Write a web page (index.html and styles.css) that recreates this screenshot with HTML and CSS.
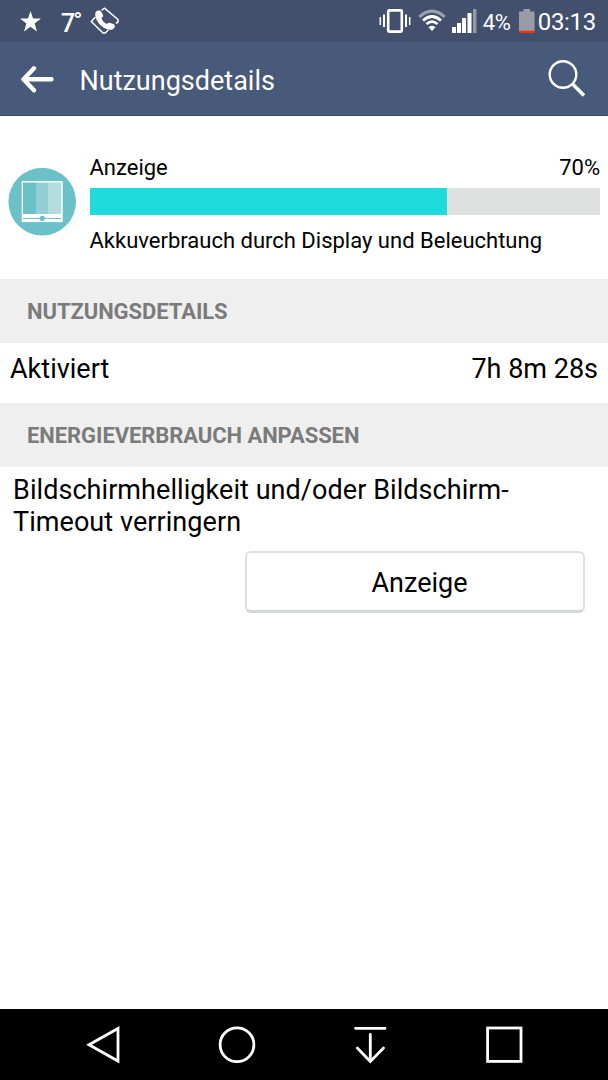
FILE: index.html
```html
<!DOCTYPE html>
<html lang="de">
  <head>
    <meta charset="UTF-8" />
    <meta name="viewport" content="width=device-width, initial-scale=1.0" />
    <title>Nutzungsdetails</title>
    <link rel="stylesheet" href="styles.css">
  </head>

  <body>
    <div class="status">
      <svg class="star" width="21" height="21" viewBox="0 0 20 20">
        <path fill="#fff" d="M10 0L12.4 7.2H20L13.9 11.9L16.2 19.5L10 15L3.8 19.5L6.1 11.9L0 7.2H7.6Z" />
      </svg>
      <div class="temp">7<span class="degree">°</span></div>
      <svg class="call" width="30" height="28" viewBox="0 0 30 28">
        <g fill="none" stroke="#fff" stroke-width="1.5" stroke-linejoin="round" stroke-linecap="round">
          <path d="M12 3L14.5 1.2L28 12.5V15L26.4 16" />
          <path d="M5 10.5L1.3 14.5L13 26L15.2 26L18 23.2" />
        </g>
        <path fill="#fff" d="M7.2 3.8C8.7 3 10.5 3.5 11.3 4.8L12.8 7.4C13.5 8.7 12.9 10 11.5 10.8C12 13.6 14.2 16 17 17C17.9 15.8 19 15.4 20.3 15.9L23.2 16.9C24.7 17.5 25.3 19 24.5 20.4C23.2 22.7 20.8 23.3 17.5 22.3C11.3 20.4 6.2 14.8 5.3 8.5C5 6.3 5.5 4.7 7.2 3.8Z" />
      </svg>
      <div class="right">
        <svg width="32" height="24" viewBox="0 0 32 24">
          <rect x="9.2" y="1.4" width="13.6" height="21.2" rx="1" fill="none" stroke="#fff" stroke-width="2.6" />
          <path stroke="#fff" stroke-width="2" d="M5 5.5V18M27 5.5V18" />
          <path stroke="#fff" stroke-width="1.5" d="M1.3 8V16M30.7 8V16" />
        </svg>
        <svg class="wifi" width="28" height="24" viewBox="0 0 28 24">
          <g fill="none" stroke="#fff">
            <path stroke="#9aa1af" stroke-width="3" d="M1.3 7.8Q14 -3.5 26.7 7.8" />
            <path stroke-width="2.8" d="M5 11.5Q14 3.5 23 11.5" />
            <path stroke-width="2.6" d="M8.5 15Q14 10.2 19.5 15" />
          </g>
          <path fill="#fff" d="M10.5 18.2Q14 15.5 17.5 18.2L14 22Z" />
        </svg>
        <svg class="signal" width="25" height="24" viewBox="0 0 25 24">
          <path fill="#fff" d="M0 18h4v6H0zM5 14h4v10H5zM10 9h4v15h-4zM15.5 4h4v20h-4z" />
          <path fill="#9299a8" d="M21 0h3.5v24H21z" />
        </svg>
        <div class="percent">4%</div>
        <svg class="battery" width="16" height="24" viewBox="0 0 16 24">
          <path fill="#999ca3" d="M4.5 0h6.5v2.5h4.5V22H0V2.5h4.5z" />
          <path fill="#ee3213" d="M0 21.7h15.5V24H0z" />
        </svg>
        <div class="time">03:13</div>
      </div>
    </div>

    <div class="header">
      <svg width="34" height="28" viewBox="0 0 34 28">
        <path fill="none" stroke="#fff" stroke-width="4.4" stroke-linecap="round" stroke-linejoin="round" d="M31.5 14.3H3.5M14 3.3L3.5 14.3L14 25.3" />
      </svg>
      <h1>Nutzungsdetails</h1>
      <svg width="38" height="38" viewBox="0 0 38 38">
        <circle cx="15" cy="14.5" r="13.3" fill="none" stroke="#fff" stroke-width="2.4" />
        <path stroke="#fff" stroke-width="3.6" d="M24.5 24L36 35.5" />
      </svg>
    </div>

    <div class="usage">
      <svg width="68" height="68" viewBox="0 0 68 68">
        <circle cx="34.2" cy="33.7" r="33.8" fill="#6bc1c8" />
        <rect x="13.7" y="13" width="41" height="41.1" fill="#fff" />
        <path fill="#6bc1c8" d="M15 14.5h13V46H15z" />
        <path fill="#93cfd4" d="M28 14.5h12V46H28z" />
        <path fill="#b4dcdf" d="M40 14.5h13.3V46H40z" />
        <path stroke="#6bc1c8" d="M15 50.5h38" />
        <circle cx="34.3" cy="50.3" r="2.6" fill="#6bc1c8" />
      </svg>
      <div class="info">
        <div class="labels">
          <span>Anzeige</span>
          <span>70%</span>
        </div>
        <div class="bar">
          <div class="fill" style="width: 70%"></div>
        </div>
        <p>Akkuverbrauch durch Display und Beleuchtung</p>
      </div>
    </div>

    <h2>NUTZUNGSDETAILS</h2>
    <div class="row">
      <span>Aktiviert</span>
      <span>7h 8m 28s</span>
    </div>

    <h2>ENERGIEVERBRAUCH ANPASSEN</h2>
    <div class="adjust">
      <p>Bildschirmhelligkeit und/oder Bildschirm-<br>Timeout verringern</p>
      <button>Anzeige</button>
    </div>

    <div class="nav">
      <svg width="38" height="38" viewBox="0 0 38 38">
        <path d="M33 2.5V35L4 18.7Z" />
      </svg>
      <svg width="38" height="38" viewBox="0 0 38 38">
        <circle cx="19" cy="18.7" r="16.9" />
      </svg>
      <svg width="38" height="38" viewBox="0 0 38 38">
        <path stroke-linecap="round" d="M3.5 2.3H33M18.3 8.5V35.5M5.3 22L18.3 35.5L31.5 22" />
      </svg>
      <svg width="38" height="38" viewBox="0 0 38 38">
        <rect x="2.6" y="2" width="33.4" height="33.4" />
      </svg>
    </div>
  </body>
</html>
```
FILE: styles.css
```css
* {
  box-sizing: border-box;
  padding: 0;
  margin: 0;
}
body {
  height: 1080px;
  display: flex;
  flex-direction: column;
  background-color: white;
  color: black;
  font-family: Roboto, sans-serif;
}
svg {
  flex-shrink: 0;
}
.status {
  height: 42px;
  display: flex;
  align-items: center;
  padding: 0 12px 0 20px;
  background-color: #42506d;
  color: white;
}
.star {
  margin-top: 1px;
}
.temp {
  width: 21px;
  display: flex;
  margin-left: 20px;
  padding-top: 5px;
  font-size: 25px;
  font-weight: 500;
  line-height: 30px;
}
.degree {
  margin-left: -2px;
  font-size: 24px;
  line-height: 24px;
}
.call {
  margin-left: 8px;
}
.right {
  display: flex;
  align-items: center;
  margin-left: auto;
}
.wifi {
  margin-left: 7px;
}
.signal {
  margin-left: 6px;
}
.percent {
  margin-left: 6px;
  padding-top: 2px;
  font-size: 22px;
  letter-spacing: -0.2px;
}
.battery {
  margin-left: 8px;
}
.time {
  margin-left: 3px;
  padding-top: 2px;
  font-size: 24px;
  letter-spacing: -0.3px;
}
.header {
  height: 74px;
  display: flex;
  align-items: center;
  padding: 0 22px 0 20px;
  background-color: #475a79;
  border-bottom: 1px solid #3d4d6a;
  color: white;
}
.header h1 {
  flex: 1;
  margin-left: 25.5px;
  padding-top: 4px;
  font-size: 27px;
  font-weight: 400;
}
.usage {
  height: 163px;
  display: flex;
  align-items: center;
  gap: 13.5px;
  padding: 8px 8px 0;
}
.info {
  flex: 1;
  padding-top: 5px;
  font-size: 22px;
  line-height: 26px;
}
.labels {
  display: flex;
  justify-content: space-between;
}
.bar {
  height: 27px;
  margin: 7px 0 13px;
  background-color: #dfe1e0;
}
.fill {
  height: 100%;
  background-color: #20dbdc;
}
h2 {
  height: 64px;
  padding-left: 27px;
  background-color: #efefef;
  color: #7b7b7b;
  font-size: 22px;
  font-weight: 700;
  letter-spacing: -0.07px;
  line-height: 66px;
}
.row {
  height: 60px;
  display: flex;
  justify-content: space-between;
  padding: 0 10px;
  font-size: 27px;
  line-height: 53px;
}
.adjust {
  flex: 1;
  display: flex;
  flex-direction: column;
  padding: 7px 23px 0 13px;
  font-size: 27px;
  line-height: 32px;
}
.adjust p {
  letter-spacing: 0.06px;
}
.adjust button {
  width: 340px;
  height: 62px;
  margin-top: 13px;
  padding: 2px 0 0 9px;
  align-self: flex-end;
  background-color: white;
  border: 2px solid #dfe1e0;
  border-bottom: 3px solid #d5d7d6;
  border-radius: 6px;
  color: black;
  font: 27px Roboto, sans-serif;
}
.nav {
  height: 71px;
  display: flex;
  justify-content: space-between;
  align-items: center;
  padding: 0 85px;
  background-color: black;
}
.nav svg {
  fill: none;
  stroke: white;
  stroke-width: 2.8;
}
```
